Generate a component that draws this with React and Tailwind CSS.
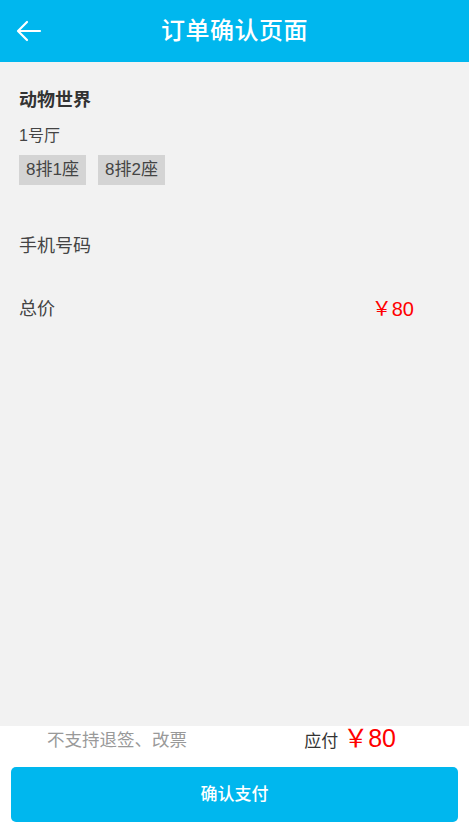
const App = () => {
  return (
    <div className="h-[834px] flex flex-col bg-[#f2f2f2] text-[#333] font-['Liberation_Sans','Noto_Sans_CJK_SC',sans-serif]">
      {/* Header */}
      <header className="relative h-[62px] bg-[#00b7ee] flex items-center justify-center shrink-0">
        <button className="absolute left-[15px] top-[19px] w-[28px] h-[24px] flex items-center justify-center">
          <svg width="26" height="22" viewBox="0 0 26 22" fill="none" stroke="white" strokeWidth="2.2" strokeLinecap="round" strokeLinejoin="round">
            <path d="M24 11H3" />
            <path d="M11 2L2 11l9 9" />
          </svg>
        </button>
        <h1 className="text-white text-[24px] font-medium tracking-[0.5px]">订单确认页面</h1>
      </header>

      {/* Content */}
      <main className="flex-1 px-[19px]">
        <div className="pt-[26px]">
          <h2 className="text-[18px] font-bold leading-[24px]">动物世界</h2>
          <p className="mt-[12px] text-[16px] leading-[24px] text-[#444]">1号厅</p>
          <div className="mt-[7px] flex gap-[12px]">
            <span className="bg-[#d4d4d4] h-[30px] w-[67px] flex items-center justify-center text-[17px] text-[#444]">8排1座</span>
            <span className="bg-[#d4d4d4] h-[30px] w-[67px] flex items-center justify-center text-[17px] text-[#444]">8排2座</span>
          </div>
        </div>

        <div className="mt-[48px] h-[26px] flex items-center text-[18px] text-[#444]">手机号码</div>

        <div className="mt-[37px] h-[26px] flex items-center justify-between pr-[36px] text-[18px]">
          <span className="text-[#444]">总价</span>
          <span className="text-[#ff0000] text-[20px]">￥80</span>
        </div>
      </main>

      {/* Footer */}
      <footer className="h-[108px] bg-white shrink-0 px-[11px] pb-[12px] flex flex-col">
        <div className="h-[28px] flex items-end justify-between">
          <span className="ml-[36px] text-[17.5px] text-[#999] leading-[28px]">不支持退签、改票</span>
          <span className="mr-[62px] flex items-baseline">
            <span className="text-[17px] text-[#333] mr-[5px]">应付</span>
            <span className="text-[25px] text-[#ff0000] leading-[28px]">￥80</span>
          </span>
        </div>
        <button className="mt-auto h-[55px] w-full rounded-[5px] bg-[#00b7ee] text-white text-[17px] font-medium">
          确认支付
        </button>
      </footer>
    </div>
  );
};

export default App;
